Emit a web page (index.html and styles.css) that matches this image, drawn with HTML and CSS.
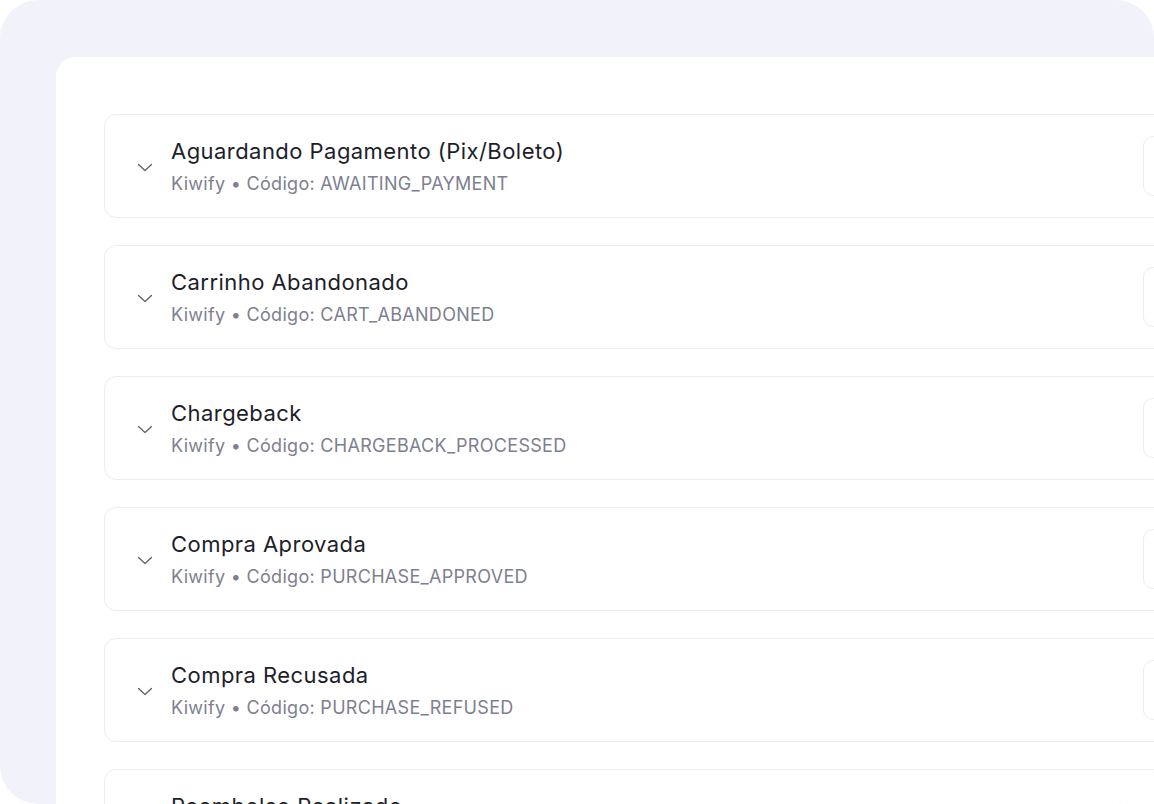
FILE: index.html
```html
<!DOCTYPE html>
<html lang="pt-BR">
<head>
<meta charset="UTF-8">
<meta name="viewport" content="width=device-width, initial-scale=1.0">
<title>Eventos Kiwify</title>
<link rel="stylesheet" href="styles.css">
</head>
<body>

<div class="frame">
  <div class="panel">
    <div class="event-list">

      <div class="event-card">
        <svg class="chevron" width="18" height="18" viewBox="0 0 18 18"><path d="M2.5 6.5l6.5 6 6.5-6" /></svg>
        <div class="event-info">
          <div class="event-title">Aguardando Pagamento (Pix/Boleto)</div>
          <div class="event-meta">Kiwify • Código: AWAITING_PAYMENT</div>
        </div>
        <div class="event-action"></div>
      </div>

      <div class="event-card">
        <svg class="chevron" width="18" height="18" viewBox="0 0 18 18"><path d="M2.5 6.5l6.5 6 6.5-6" /></svg>
        <div class="event-info">
          <div class="event-title">Carrinho Abandonado</div>
          <div class="event-meta">Kiwify • Código: CART_ABANDONED</div>
        </div>
        <div class="event-action"></div>
      </div>

      <div class="event-card">
        <svg class="chevron" width="18" height="18" viewBox="0 0 18 18"><path d="M2.5 6.5l6.5 6 6.5-6" /></svg>
        <div class="event-info">
          <div class="event-title">Chargeback</div>
          <div class="event-meta">Kiwify • Código: CHARGEBACK_PROCESSED</div>
        </div>
        <div class="event-action"></div>
      </div>

      <div class="event-card">
        <svg class="chevron" width="18" height="18" viewBox="0 0 18 18"><path d="M2.5 6.5l6.5 6 6.5-6" /></svg>
        <div class="event-info">
          <div class="event-title">Compra Aprovada</div>
          <div class="event-meta">Kiwify • Código: PURCHASE_APPROVED</div>
        </div>
        <div class="event-action"></div>
      </div>

      <div class="event-card">
        <svg class="chevron" width="18" height="18" viewBox="0 0 18 18"><path d="M2.5 6.5l6.5 6 6.5-6" /></svg>
        <div class="event-info">
          <div class="event-title">Compra Recusada</div>
          <div class="event-meta">Kiwify • Código: PURCHASE_REFUSED</div>
        </div>
        <div class="event-action"></div>
      </div>

      <div class="event-card">
        <svg class="chevron" width="18" height="18" viewBox="0 0 18 18"><path d="M2.5 6.5l6.5 6 6.5-6" /></svg>
        <div class="event-info">
          <div class="event-title">Reembolso Realizado</div>
          <div class="event-meta">Kiwify • Código: ORDER_REFUNDED</div>
        </div>
        <div class="event-action"></div>
      </div>

    </div>
  </div>
</div>

</body>
</html>
```

FILE: styles.css
```css
html, body {
  margin: 0;
  padding: 0;
  height: 100%;
  overflow: hidden;
}

body {
  font-family: Inter, "Noto Sans", sans-serif;
  background-color: #ffffff;
}

.frame {
  width: 1154px;
  height: 804px;
  background-color: #f2f3fa;
  border-radius: 38px;
  overflow: hidden;
  padding: 57px 0 0 56px;
  box-sizing: border-box;
}

.panel {
  width: 1184px;
  height: 900px;
  background-color: #ffffff;
  border-top-left-radius: 20px;
  padding: 57px 0 0 48px;
  box-sizing: border-box;
}

.event-list {
  display: flex;
  flex-direction: column;
  gap: 27px;
}

.event-card {
  display: flex;
  align-items: center;
  height: 104px;
  box-sizing: border-box;
  border: 1px solid #ececf1;
  border-radius: 12px;
  padding: 0 0 0 31px;
}

.chevron {
  flex: none;
  fill: none;
  stroke: #5f6170;
  stroke-width: 1.3;
  stroke-linecap: round;
  stroke-linejoin: round;
  margin-top: 2px;
}

.event-info {
  flex: 1;
  margin-left: 17px;
}

.event-title {
  font-size: 22px;
  letter-spacing: 0.45px;
  color: #1d1e2a;
  line-height: 28px;
}

.event-meta {
  font-size: 18px;
  letter-spacing: 0.3px;
  color: #7e8090;
  line-height: 22px;
  margin-top: 8px;
}

.event-action {
  flex: none;
  width: 80px;
  height: 60px;
  border: 1px solid #ececf1;
  border-radius: 10px;
  box-sizing: border-box;
  margin-right: 16px;
}
```
